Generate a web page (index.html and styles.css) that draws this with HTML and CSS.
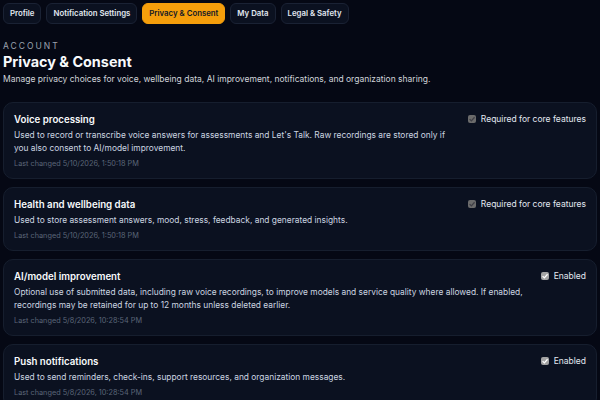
FILE: index.html
```html
<!DOCTYPE html>
<html lang="en">
  <head>
    <meta charset="UTF-8" />
    <meta name="viewport" content="width=device-width, initial-scale=1.0" />
    <title>Privacy & Consent</title>
    <link rel="stylesheet" href="styles.css">
  </head>
  <body>
    <nav class="tabs">
      <a class="tab" href="#">Profile</a>
      <a class="tab" href="#">Notification Settings</a>
      <a class="tab active" href="#">Privacy &amp; Consent</a>
      <a class="tab" href="#">My Data</a>
      <a class="tab" href="#">Legal &amp; Safety</a>
    </nav>

    <header class="page-head">
      <div class="eyebrow">ACCOUNT</div>
      <h1>Privacy &amp; Consent</h1>
      <p>Manage privacy choices for voice, wellbeing data, AI improvement, notifications, and organization sharing.</p>
    </header>

    <section class="consent-list">
      <div class="consent-card">
        <div class="consent-body">
          <h3>Voice processing</h3>
          <p>Used to record or transcribe voice answers for assessments and Let's Talk. Raw recordings are stored only if you also consent to AI/model improvement.</p>
          <div class="changed">Last changed 5/10/2026, 1:50:18 PM</div>
        </div>
        <label class="toggle">
          <span class="box disabled"><svg viewBox="0 0 10 10"><path d="M2 5.2 L4.2 7.4 L8.2 2.8" /></svg></span>
          Required for core features
        </label>
      </div>

      <div class="consent-card">
        <div class="consent-body">
          <h3>Health and wellbeing data</h3>
          <p>Used to store assessment answers, mood, stress, feedback, and generated insights.</p>
          <div class="changed">Last changed 5/10/2026, 1:50:18 PM</div>
        </div>
        <label class="toggle">
          <span class="box disabled"><svg viewBox="0 0 10 10"><path d="M2 5.2 L4.2 7.4 L8.2 2.8" /></svg></span>
          Required for core features
        </label>
      </div>

      <div class="consent-card">
        <div class="consent-body">
          <h3>AI/model improvement</h3>
          <p>Optional use of submitted data, including raw voice recordings, to improve models and service quality where allowed. If enabled, recordings may be retained for up to 12 months unless deleted earlier.</p>
          <div class="changed">Last changed 5/8/2026, 10:28:54 PM</div>
        </div>
        <label class="toggle">
          <span class="box"><svg viewBox="0 0 10 10"><path d="M2 5.2 L4.2 7.4 L8.2 2.8" /></svg></span>
          Enabled
        </label>
      </div>

      <div class="consent-card">
        <div class="consent-body">
          <h3>Push notifications</h3>
          <p>Used to send reminders, check-ins, support resources, and organization messages.</p>
          <div class="changed">Last changed 5/8/2026, 10:28:54 PM</div>
        </div>
        <label class="toggle">
          <span class="box"><svg viewBox="0 0 10 10"><path d="M2 5.2 L4.2 7.4 L8.2 2.8" /></svg></span>
          Enabled
        </label>
      </div>
    </section>
  </body>
</html>
```

FILE: styles.css
```css
* {
  margin: 0;
  padding: 0;
  box-sizing: border-box;
}

body {
  font-family: Inter, "Noto Sans", sans-serif;
  background-color: #050814;
  color: #e5e7eb;
  padding: 3px 3px 0 3px;
  overflow: hidden;
}

.tabs {
  display: flex;
  gap: 5px;
}

.tab {
  display: block;
  height: 21px;
  line-height: 19px;
  padding: 0 6px;
  font-size: 7.8px;
  font-weight: 600;
  color: #e2e8f0;
  text-decoration: none;
  background: #0b1120;
  border: 1px solid #1a2234;
  border-radius: 6px;
}

.tab.active {
  background: #f59e0b;
  border-color: #f59e0b;
  color: #111827;
}

.page-head {
  margin-top: 17px;
}

.eyebrow {
  font-size: 8.5px;
  letter-spacing: 2px;
  color: #9ca3af;
  line-height: 11px;
}

.page-head h1 {
  margin-top: 1px;
  font-size: 14.4px;
  font-weight: 700;
  color: #f8fafc;
  line-height: 17px;
}

.page-head p {
  margin-top: 3px;
  font-size: 8.5px;
  color: #d1d5db;
  line-height: 12px;
}

.consent-list {
  margin-top: 17px;
  display: flex;
  flex-direction: column;
  gap: 8px;
}

.consent-card {
  display: flex;
  justify-content: space-between;
  align-items: flex-start;
  gap: 12px;
  padding: 10px 10px 9px 10px;
  background: #0b1120;
  border: 1px solid #161e2e;
  border-radius: 10px;
}

.consent-body h3 {
  font-size: 9.7px;
  font-weight: 600;
  color: #f8fafc;
  line-height: 14px;
}

.consent-body p {
  margin-top: 2px;
  font-size: 8.4px;
  color: #cbd5e1;
  line-height: 13px;
}

.changed {
  margin-top: 3px;
  font-size: 7.3px;
  color: #5b6678;
  line-height: 11px;
}

.toggle {
  flex-shrink: 0;
  display: flex;
  align-items: center;
  gap: 5px;
  font-size: 8.5px;
  color: #e2e8f0;
  white-space: nowrap;
  line-height: 12px;
}

.box {
  width: 8px;
  height: 8px;
  border-radius: 2px;
  background: #a3a3a3;
  display: flex;
}

.box svg {
  width: 8px;
  height: 8px;
  fill: none;
  stroke: #ffffff;
  stroke-width: 1.6;
}

.box.disabled {
  background: #6b6b6b;
}

.box.disabled svg {
  stroke: #3f3f46;
}
```
